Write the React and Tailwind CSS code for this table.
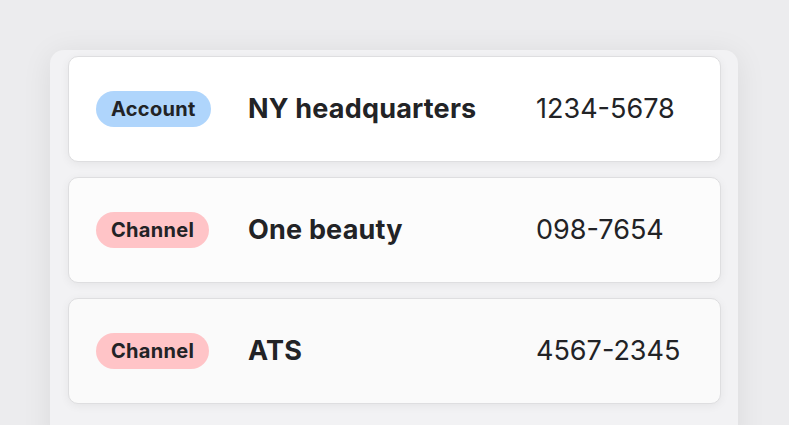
import React from 'react';

const rows = [
  { tag: 'Account', tone: 'bg-[#afd5fc]', name: 'NY headquarters', phone: '1234-5678', bg: 'bg-white' },
  { tag: 'Channel', tone: 'bg-[#ffc4c7]', name: 'One beauty', phone: '098-7654', bg: 'bg-[#fcfcfc]' },
  { tag: 'Channel', tone: 'bg-[#ffc4c7]', name: 'ATS', phone: '4567-2345', bg: 'bg-[#fafafa]' },
];

const Row = ({ tag, tone, name, phone, bg }) => (
  <div
    className={`${bg} h-[106px] rounded-[10px] border border-[#dedee0] shadow-[0_2px_10px_rgba(0,0,0,0.06)] flex items-center pl-[27px] text-[#222326]`}
  >
    <div className="w-[152px] shrink-0">
      <span className={`${tone} inline-flex items-center h-[36px] px-[15px] rounded-full text-[20px] font-bold tracking-[0.3px]`}>
        {tag}
      </span>
    </div>
    <div className="w-[288px] shrink-0 text-[27px] font-bold tracking-[0.2px]">{name}</div>
    <div className="text-[27px] font-normal">{phone}</div>
  </div>
);

export default function App() {
  return (
    <div
      className="w-[789px] h-[425px] overflow-hidden bg-[#ececee] pt-[50px] pl-[50px]"
      style={{ fontFamily: 'Inter, "Noto Sans", sans-serif' }}
    >
      <div className="w-[688px] h-[400px] bg-[#f2f2f4] rounded-[14px] shadow-[0_4px_30px_rgba(0,0,0,0.08)] pt-[6px] px-[18px] pr-[17px] flex flex-col gap-[15px]">
        {rows.map((r, i) => (
          <Row key={i} {...r} />
        ))}
      </div>
    </div>
  );
}
